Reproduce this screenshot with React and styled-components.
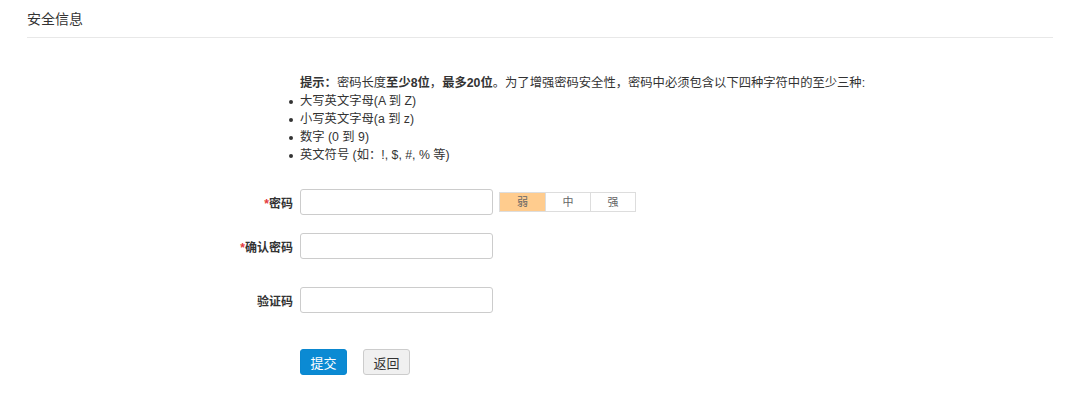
import React from "react";
import styled, { createGlobalStyle } from "styled-components";

const Global = createGlobalStyle`
  html, body { margin: 0; padding: 0; background: #fff; }
  body {
    font-family: "Liberation Sans", "Noto Sans CJK SC", sans-serif;
    font-size: 12px;
    color: #333;
  }
`;

const Page = styled.div`
  padding: 0 27px;
`;

const Title = styled.h2`
  margin: 0;
  padding: 9px 0 7px;
  font-size: 14px;
  line-height: 21px;
  font-weight: normal;
  color: #333;
  border-bottom: 1px solid #e8e8e8;
`;

const Form = styled.div`
  display: grid;
  grid-template-columns: 266px 1fr;
  column-gap: 7px;
  margin-top: 36px;
`;

const Hint = styled.div`
  grid-column: 2;
  font-size: 12.3px;
  line-height: 18px;
  color: #333;
`;

const HintLine = styled.p`
  margin: 0;
`;

const List = styled.ul`
  margin: 0;
  padding-left: 0;
  list-style: none;
`;

const Item = styled.li`
  position: relative;
  &::before {
    content: "";
    position: absolute;
    left: -11px;
    top: 8px;
    width: 4px;
    height: 4px;
    border-radius: 50%;
    background: #333;
  }
`;

const Label = styled.label`
  grid-column: 1;
  text-align: right;
  font-weight: bold;
  align-self: center;
  color: #333;
  margin-top: ${(p) => p.$top || 0}px;
`;

const Star = styled.span`
  color: #e4393c;
`;

const Field = styled.div`
  grid-column: 2;
  display: flex;
  align-items: center;
  gap: 6px;
  margin-top: ${(p) => p.$top || 0}px;
`;

const Input = styled.input`
  box-sizing: border-box;
  width: 193px;
  height: 26px;
  border: 1px solid #ccc;
  border-radius: 3px;
  padding: 0 6px;
  font-size: 12px;
  outline: none;
`;

const Strength = styled.div`
  display: flex;
  border: 1px solid #ddd;
`;

const Level = styled.span`
  box-sizing: border-box;
  width: 45px;
  height: 18px;
  line-height: 18px;
  text-align: center;
  font-size: 11px;
  color: #666;
  background: ${(p) => (p.$on ? "#ffcc8e" : "#fff")};
  & + & { border-left: 1px solid #ddd; }
`;

const Actions = styled.div`
  grid-column: 2;
  display: flex;
  gap: 16px;
  margin-top: 36px;
`;

const Button = styled.button`
  box-sizing: border-box;
  width: 47px;
  height: 26px;
  border-radius: 3px;
  font-family: inherit;
  font-size: 13px;
  padding: 0;
  cursor: pointer;
  border: 1px solid ${(p) => (p.$primary ? "#0a87cf" : "#ccc")};
  background: ${(p) => (p.$primary ? "#0b8ad3" : "#f0f0f0")};
  color: ${(p) => (p.$primary ? "#fff" : "#333")};
`;

export default function App() {
  return (
    <Page>
      <Global />
      <Title>安全信息</Title>
      <Form>
        <Hint>
          <HintLine>
            <b>提示：</b>密码长度<b>至少8位</b>，<b>最多20位</b>。为了增强密码安全性，密码中必须包含以下四种字符中的至少三种:
          </HintLine>
          <List>
            <Item>大写英文字母(A 到 Z)</Item>
            <Item>小写英文字母(a 到 z)</Item>
            <Item>数字 (0 到 9)</Item>
            <Item>英文符号 (如：!, $, #, % 等)</Item>
          </List>
        </Hint>

        <Label $top={25}><Star>*</Star>密码</Label>
        <Field $top={25}>
          <Input type="password" />
          <Strength>
            <Level $on>弱</Level>
            <Level>中</Level>
            <Level>强</Level>
          </Strength>
        </Field>

        <Label $top={18}><Star>*</Star>确认密码</Label>
        <Field $top={18}>
          <Input type="password" />
        </Field>

        <Label $top={28}>验证码</Label>
        <Field $top={28}>
          <Input type="text" />
        </Field>

        <Actions>
          <Button $primary>提交</Button>
          <Button>返回</Button>
        </Actions>
      </Form>
    </Page>
  );
}
